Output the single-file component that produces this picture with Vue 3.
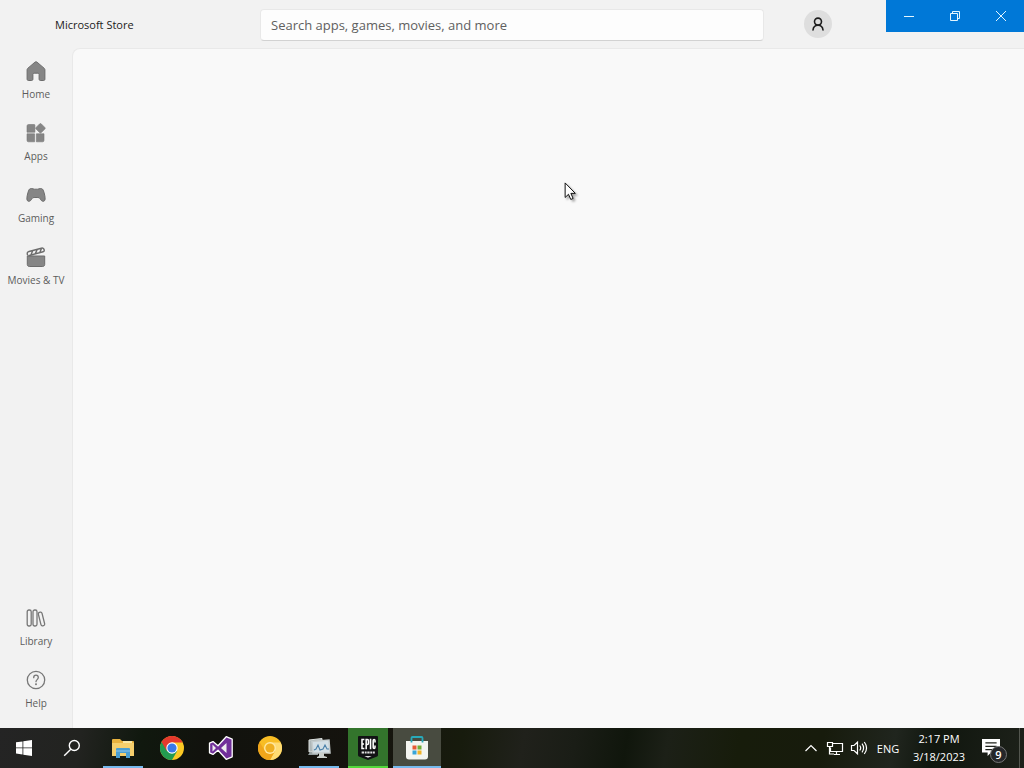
<script setup>
const topLinks = [
  { id: 'home', label: 'Home' },
  { id: 'apps', label: 'Apps' },
  { id: 'gaming', label: 'Gaming' },
  { id: 'movies', label: 'Movies & TV' },
]
const bottomLinks = [
  { id: 'library', label: 'Library' },
  { id: 'help', label: 'Help' },
]
const groups = [
  { name: 'main', links: topLinks },
  { name: 'more', links: bottomLinks },
]
</script>

<template>
  <div class="desktop">
    <div class="store">
      <header class="titlebar">
        <h1 class="title">Microsoft Store</h1>
        <input class="search" type="search" aria-label="Search" placeholder="Search apps, games, movies, and more" />
        <div class="right">
          <button class="account" aria-label="Account">
            <svg width="16" height="16" viewBox="0 0 16 16" fill="none" stroke="#1c1c1c" stroke-width="1.6" stroke-linecap="round">
              <circle cx="8" cy="5.600" r="3.500" />
              <path d="M3 14c.3-3 2.200-4.800 5-4.800s4.700 1.800 5 4.800" />
            </svg>
          </button>
          <div class="window-buttons">
            <button aria-label="Minimize"><svg width="12" height="12" viewBox="0 0 12 12"><path d="M1 6.500h10" /></svg></button>
            <button aria-label="Restore"><svg width="12" height="12" viewBox="0 0 12 12"><path d="M1.500 3.500h7v7h-7zM3.500 3.500v-2h7v7h-2" /></svg></button>
            <button aria-label="Close"><svg width="12" height="12" viewBox="0 0 12 12"><path d="M1 1l10 10M11 1L1 11" /></svg></button>
          </div>
        </div>
      </header>

      <div class="body">
        <nav class="rail">
          <div v-for="group in groups" :key="group.name" class="group">
            <a v-for="link in group.links" :key="link.id" class="link" href="#">
              <svg width="20" height="20" viewBox="0 0 20 20" fill="#868686" stroke="#6c6c6c" stroke-width="1" stroke-linejoin="round">
                <path v-if="link.id === 'home'" d="M8.900 1.200a1.700 1.700 0 0 1 2.200 0l7.200 6.200c.4.300.6.800.6 1.300v9.600c0 .7-.5 1.200-1.200 1.200h-3.400c-.7 0-1.200-.5-1.200-1.200v-4.800c0-.8-.5-1.300-1.200-1.300H8.100c-.7 0-1.200.5-1.200 1.300v4.800c0 .7-.5 1.200-1.200 1.200H2.300c-.7 0-1.200-.5-1.200-1.200V8.700c0-.5.2-1 .6-1.300z" />
                <g v-else-if="link.id === 'apps'" stroke="#777" stroke-width=".6">
                  <path d="M2.500 1.500h5.700q.7 0 .7.700v7H1V3q0-1.500 1.500-1.500zM1 10.800h7.600v8H2.500Q1 18.800 1 17.300zM10.400 10.800H18v6.500q0 1.500-1.500 1.500h-6.100z" />
                  <path d="M13.600.9a1.200 1.200 0 0 1 1.700 0l3.500 3.500a1.200 1.200 0 0 1 0 1.700l-3.500 3.500a1.200 1.200 0 0 1-1.700 0l-3.500-3.500a1.200 1.200 0 0 1 0-1.700z" />
                </g>
                <path v-else-if="link.id === 'gaming'" d="M5.500 3.500c-1.700 0-2.500.8-3 2.400C1.600 8.500.8 11.800.9 14c.1 1.500.8 2.300 1.900 2.300 1.600 0 2.300-1.300 3.300-2.700.5-.8 1.100-1.100 2-1.100h3.800c.9 0 1.500.3 2 1.100 1 1.400 1.700 2.700 3.300 2.700 1.100 0 1.800-.8 1.900-2.300.1-2.200-.7-5.500-1.600-8.100-.5-1.600-1.300-2.400-3-2.400-1.200 0-1.800.7-2.900.7H8.400c-1.100 0-1.700-.7-2.900-.7z" />
                <g v-else-if="link.id === 'movies'">
                  <path d="M1.300 9h17.400v8.500c0 1.200-.8 2-2 2H3.300c-1.200 0-2-.8-2-2z" />
                  <path fill="none" stroke-width="1.400" d="M1.700 8.500C.8 6 1.200 5 3 4.500L15.300 1.200c1.600-.4 2.500 0 2.900 1.700.2 1-.1 1.600-1.100 1.900L2.500 8.700M6.800 3.500L5 7.700M11.200 2.400L9.400 6.500M15.600 1.300L13.800 5.500" />
                </g>
                <g v-else-if="link.id === 'library'" fill="none" stroke="#777" stroke-width="1.300">
                  <rect x="1.200" y="2" width="4" height="16" rx="1.700" />
                  <rect x="7" y="2" width="4" height="16" rx="1.700" />
                  <rect x="13.600" y="4" width="3.800" height="14" rx="1.600" transform="rotate(-14 15.500 11)" />
                </g>
                <g v-else fill="none" stroke="#777" stroke-width="1.300" stroke-linecap="round">
                  <circle cx="10" cy="10" r="8.700" />
                  <path d="M7.700 7.700c0-1.500.9-2.500 2.300-2.500s2.300 1 2.300 2.300c0 2-2.300 2.200-2.300 4.200" />
                  <circle cx="10" cy="14.200" r=".4" />
                </g>
              </svg>
              <span>{{ link.label }}</span>
            </a>
          </div>
        </nav>
        <main class="content"></main>
      </div>
    </div>

    <footer class="taskbar">
      <div class="system">
        <button class="task" aria-label="Start">
          <svg width="16" height="16" viewBox="0 0 16 16" fill="#fff"><path d="M0 2.300l6.500-.9v6.100H0zM7.300 1.300L16 0v7.500H7.300zM0 8.300h6.500v6.200L0 13.600zM7.300 8.300H16V16l-8.700-1.300z" /></svg>
        </button>
        <button class="task" aria-label="Search">
          <svg width="18" height="18" viewBox="0 0 18 18" fill="none" stroke="#fff" stroke-width="1.400"><circle cx="11.300" cy="6.500" r="5" /><path d="M7.800 10.200L1.200 16.800" /></svg>
        </button>
      </div>
      <button class="task open" aria-label="File Explorer">
        <svg width="24" height="24" viewBox="0 0 24 24">
          <path fill="#e8b23e" d="M1 4q0-1 1-1h7l2 2h11q1 0 1 1v14H1z" />
          <path fill="#f5cf6c" d="M1 7h22v13H1z" />
          <path fill="#f9e7a5" d="M12 5h9v2h-9z" />
          <path fill="#4b9fd2" d="M5 13q0-1 1-1h12q1 0 1 1v9h-4v-5H9v5H5z" />
          <path fill="#6db3df" d="M5 14h14v2H5z" />
        </svg>
      </button>
      <button class="task" aria-label="Google Chrome">
        <svg width="24" height="24" viewBox="0 0 24 24">
          <circle cx="12" cy="12" r="12" fill="#fbc924" />
          <path fill="#239b50" d="M1.600 6A12 12 0 0 0 12 24l5.200-9L12 12z" />
          <path fill="#e5392d" d="M1.600 6L6.800 15 12 6.500h10.600L22.400 6A12 12 0 0 0 1.600 6z" />
          <circle cx="12" cy="12" r="5.700" fill="#fff" />
          <circle cx="12" cy="12" r="4.600" fill="#3979e8" />
        </svg>
      </button>
      <button class="task" aria-label="Visual Studio">
        <svg width="26" height="26" viewBox="0 0 26 26">
          <path fill="#71309a" stroke="#fff" stroke-width="1.300" stroke-linejoin="round" d="M1.500 8.200L5 6.600l5 4.100 8.200-9 6 2.500v17.600l-6 2.500-8.200-9-5 4.100-3.500-1.600z" />
          <path fill="#eee" d="M4.500 9.500v7l3.500-3.500zM18.500 8L13 13l5.500 5z" />
        </svg>
      </button>
      <button class="task" aria-label="Chrome Canary">
        <svg width="24" height="24" viewBox="0 0 24 24">
          <circle cx="12" cy="12" r="12" fill="#f8bd24" />
          <path fill="#ffdc72" d="M12 6.500h10.700A12 12 0 0 1 12 24l5-9z" />
          <path fill="#efa51b" d="M1.600 6A12 12 0 0 0 12 24l5-9H7z" />
          <circle cx="12" cy="12" r="6" fill="#ffe7a1" />
          <circle cx="12" cy="12" r="4.600" fill="#efaf21" />
        </svg>
      </button>
      <button class="task open" aria-label="System Monitor">
        <svg width="24" height="24" viewBox="0 0 24 24">
          <path fill="#aeb7b8" stroke="#dde1de" d="M2 4l13-1.500v12L2 16z" />
          <path fill="#98a2a3" d="M3 16h8v3H1z" />
          <path fill="#d3dfe5" stroke="#c5cccd" stroke-width="1.500" d="M5 5.500L22 4l1 13H6z" />
          <path fill="none" stroke="#4a80a9" stroke-width="1.100" d="M7 14l2-1 2-4 2 5 3-1 2-4 2 4h2" />
          <path fill="#cbd0cd" d="M12 17h5v3l3 1v1H10v-1l2-1z" />
        </svg>
      </button>
      <button class="task epic" aria-label="Epic Games">
        <svg width="20" height="24" viewBox="0 0 22 24" preserveAspectRatio="none">
          <path fill="#111214" d="M0 1q0-1 1-1h20q1 0 1 1v18q0 1-1 1.500L11 24l-10-3.500Q0 20 0 19z" />
          <path fill="none" stroke="#fff" stroke-width="1.700" d="M7 3.500H4.400v9H7M4.400 8h2.200M9 13.200V3.500h1.300q1.200 0 1.200 1.200v2.600q0 1.200-1.200 1.200H9M13.800 2.800v10.400M18.700 6.500V4.800q0-1.300-1-1.300t-1 1.300v6.400q0 1.300 1 1.300t1-1.300V9.500" />
          <path fill="none" stroke="#ddd" stroke-width="1.800" d="M4 16.500h2.700M7.500 16.500h2M10.200 16.500h2.600M13.500 16.500h2M16.200 16.500h2.300" />
          <path fill="#ddd" d="M7 20h8l-4 1.700z" />
        </svg>
      </button>
      <button class="task open active" aria-label="Microsoft Store">
        <svg width="24" height="24" viewBox="0 0 24 24">
          <path fill="#f4f5f0" d="M1 5h22v15.500q0 3-3 3H4q-3 0-3-3z" />
          <path fill="none" stroke="#28a9ba" stroke-width="1.800" d="M6.500 6.500V2q0-1 1-1h9q1 0 1 1v4.500" />
          <path fill="#e75a35" d="M7.500 9.500h4v4h-4z" /><path fill="#72ae36" d="M12.500 9.500h4v4h-4z" />
          <path fill="#38a5d9" d="M7.500 14.500h4v4h-4z" /><path fill="#f0b329" d="M12.500 14.500h4v4h-4z" />
        </svg>
      </button>

      <div class="tray">
        <button class="tray-icon" aria-label="Show hidden icons"><svg width="16" height="16" viewBox="0 0 16 16"><path d="M2.500 11L8 5.500 13.500 11" /></svg></button>
        <button class="tray-icon" aria-label="Network"><svg width="18" height="16" viewBox="0 0 18 16"><path d="M6.500 3.500h10v8h-12v-4M8 14.500h6M10.500 11.500v3M1.500 2.500h5v4h-5zM3.500 6.500v7.500H8" /></svg></button>
        <button class="tray-icon" aria-label="Volume"><svg width="18" height="16" viewBox="0 0 18 16"><path d="M1.500 5.500H4l3.500-3.300v11.600L4 10.500H1.500zM9.700 5.500q2 2.500 0 5M12 3.700q3.200 4.300 0 8.600M14.300 2q4.500 6 0 12" /></svg></button>
        <button class="language">ENG</button>
        <button class="clock"><span>2:17 PM</span><span>3/18/2023</span></button>
        <button class="notices" aria-label="Notifications">
          <svg width="18" height="18" viewBox="0 0 16 16"><path fill="#fff" d="M0 0h16v12H8l-3 3v-3H0z" /><path stroke="#20231d" stroke-width="1.200" d="M3 3.500h10M3 6.500h10M3 9.500h6" /></svg>
          <span class="badge">9</span>
        </button>
        <button class="peek" aria-label="Show desktop"></button>
      </div>
    </footer>

    <svg class="pointer" width="15" height="20" viewBox="0 0 16 22"><path fill="#fff" stroke="#111" stroke-width="1.100" d="M1 1v16l3.700-3.500 2.500 5.700 2.600-1.100-2.500-5.600h4.900z" /></svg>
  </div>
</template>

<style>
body {
  margin: 0;
}
</style>

<style scoped>
.desktop {
  position: relative;
  display: flex;
  flex-direction: column;
  min-height: 100vh;
  font-family: "Open Sans", "Noto Sans", sans-serif;
  color: #1b1b1b;
}
.desktop *,
.desktop {
  box-sizing: border-box;
}
button {
  padding: 0;
  border: 0;
  background: none;
  color: inherit;
  font: inherit;
}
.store {
  flex: 1;
  display: flex;
  flex-direction: column;
  background: #f2f2f2;
}
.titlebar {
  display: grid;
  grid-template-columns: 1fr minmax(240px, 504px) 1fr;
  height: 48px;
}
.title {
  margin: 0;
  padding-left: 55px;
  font-size: 11px;
  font-weight: 400;
  line-height: 49px;
}
.search {
  align-self: center;
  width: 100%;
  height: 32px;
  padding: 0 10px;
  border: 1px solid #e8e8e8;
  border-bottom-color: #d2d2d2;
  border-radius: 4px;
  background: #fdfdfd;
  font: 13px "Open Sans", "Noto Sans", sans-serif;
}
.search::placeholder {
  color: #606060;
}
.right {
  display: flex;
  justify-content: space-between;
  height: 48px;
  padding-left: 40px;
}
.account {
  display: grid;
  place-items: center;
  align-self: center;
  width: 28px;
  height: 28px;
  border-radius: 50%;
  background: #dedede;
}
.window-buttons {
  display: flex;
  height: 32px;
  background: #0078d7;
}
.window-buttons button {
  display: grid;
  place-items: center;
  width: 46px;
}
.window-buttons svg {
  fill: none;
  stroke: #e3f6ff;
}
.body {
  flex: 1;
  display: flex;
}
.rail {
  display: flex;
  flex-direction: column;
  justify-content: space-between;
  width: 72px;
  padding-bottom: 9px;
}
.link {
  display: flex;
  flex-direction: column;
  align-items: center;
  gap: 6px;
  height: 62px;
  padding-top: 13px;
  color: #5c5c5c;
  font-size: 10px;
  line-height: 14px;
  text-decoration: none;
  white-space: nowrap;
}
.content {
  flex: 1;
  border: solid #e9e9e9;
  border-width: 1px 0 0 1px;
  border-top-left-radius: 8px;
  background: #f9f9f9;
}
.taskbar {
  display: flex;
  height: 40px;
  gap: 1px;
  background: linear-gradient(100deg, #242424 0, #222320 8%, #10180e 14%, #11120d 20%, #15130e 36%, #171b0d 45%, #20211b 51%, #1a1d16 56%, #10160c 61%, #1c2017 65%, #171c0b 72%, #171b0c 80%, #20251e 87%, #10160e 91%, #1d211a 100%);
  color: #fff;
}
.system {
  display: flex;
  width: 98px;
}
.task {
  display: grid;
  place-items: center;
  width: 48px;
}
.open {
  background: linear-gradient(#76b9ed, #76b9ed) center bottom / 40px 2px no-repeat;
}
.active {
  background-color: #484b40;
  background-size: 100% 2px;
}
.epic {
  width: 40px;
  margin: 0 4px;
  background: linear-gradient(#52d83b, #52d83b) center bottom / 100% 2px no-repeat, #33742c;
}
.tray {
  display: flex;
  margin-left: auto;
}
.tray-icon {
  display: grid;
  place-items: center;
  width: 24px;
}
.tray-icon svg {
  fill: none;
  stroke: #fff;
  stroke-width: 1.2;
}
.language {
  width: 34px;
  font-size: 11px;
}
.clock {
  display: flex;
  flex-direction: column;
  justify-content: center;
  align-items: center;
  width: 68px;
  font-size: 11px;
  line-height: 18px;
}
.notices {
  position: relative;
  display: grid;
  place-items: center;
  width: 46px;
}
.notices svg {
  margin-right: 10px;
}
.badge {
  position: absolute;
  left: 17px;
  top: 18px;
  width: 17px;
  height: 17px;
  border: 1px solid #777;
  border-radius: 50%;
  background: #25272a;
  font-size: 11px;
  font-weight: 600;
  line-height: 15px;
}
.peek {
  width: 5px;
  border-left: 1px solid #53564f;
}
.pointer {
  position: absolute;
  left: 564px;
  top: 182px;
  filter: drop-shadow(2px 2px 1px #0005);
}
</style>
